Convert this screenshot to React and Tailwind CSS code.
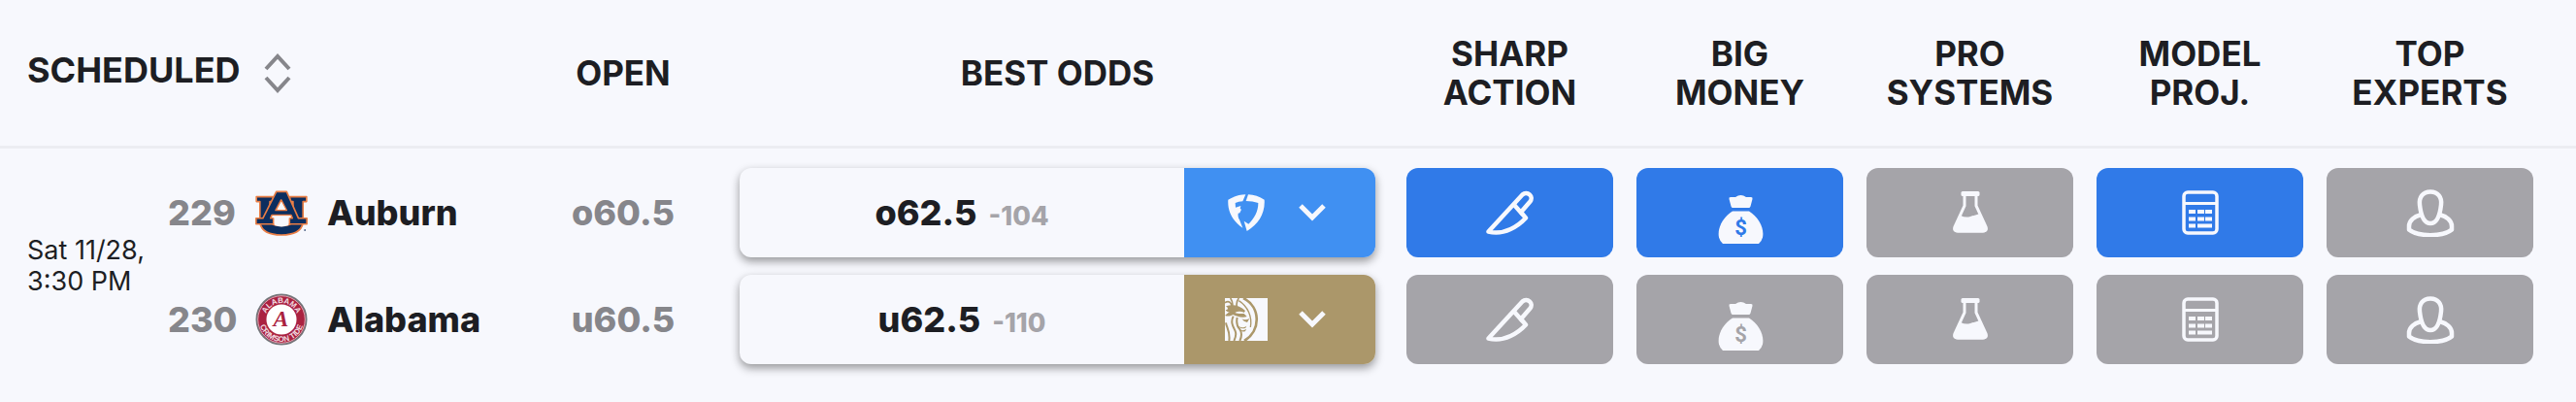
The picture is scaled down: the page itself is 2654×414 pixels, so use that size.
import React, { useState } from "react";

const signals = [
  { id: "sharp", label: ["SHARP", "ACTION"], Icon: KnifeIcon, over: true, under: false },
  { id: "money", label: ["BIG", "MONEY"], Icon: MoneyBagIcon, over: true, under: false },
  { id: "systems", label: ["PRO", "SYSTEMS"], Icon: FlaskIcon, over: false, under: false },
  { id: "model", label: ["MODEL", "PROJ."], Icon: CalculatorIcon, over: true, under: false },
  { id: "experts", label: ["TOP", "EXPERTS"], Icon: ExpertIcon, over: false, under: false },
];

const sides = [
  {
    key: "over",
    rotation: 229,
    team: "Auburn",
    Logo: AuburnLogo,
    open: "o60.5",
    best: "o62.5",
    price: "-104",
    book: "FanDuel",
    BookLogo: FanDuelLogo,
    bookColor: "bg-[#4090f2]",
  },
  {
    key: "under",
    rotation: 230,
    team: "Alabama",
    Logo: AlabamaLogo,
    open: "u60.5",
    best: "u62.5",
    price: "-110",
    book: "BetMGM",
    BookLogo: BetMgmLogo,
    bookColor: "bg-[#ab976a]",
  },
];

function SortIcon() {
  return (
    <svg viewBox="0 0 28 46" className="w-7 h-[46px]" fill="none" stroke="#86868b" strokeWidth="4">
      <path d="M2 19 14 6l12 13M2 28l12 13 12-13" />
    </svg>
  );
}

function ChevronIcon() {
  return (
    <svg viewBox="0 0 28 18" className="w-7 h-[18px]" fill="none" stroke="#f7f8fd" strokeWidth="5">
      <path d="m2 2 12 12L26 2" />
    </svg>
  );
}

function KnifeIcon() {
  return (
    <svg viewBox="0 0 50 50" className="size-[50px]" fill="none" stroke="currentColor" strokeWidth="4.500" strokeLinejoin="round" strokeLinecap="round">
      <path d="M2.500 44.500 37.500 6.500c5-4.500 12 2 8 7L36 24.500l5 6C34 38 19 49 2.500 44.500Z" />
      <path d="m29 17 8 9" />
    </svg>
  );
}

function MoneyBagIcon() {
  return (
    <svg viewBox="0 0 50 80" className="w-[50px] h-20" fill="currentColor">
      <path d="M13.500 26q-.6-2 1.500-2h5q5.500-4 11 0h5q2 0 1.500 2l-2 7.500q-.4 1.500-2 1.500h-16q-1.600 0-2-1.500Z" />
      <path d="M17 38.500h17c10 6 16 18 14 27q-1 4-4 6.500H7q-3-2.500-4-6.500c-2-9 4-21 14-27Z" />
      <text x="25.500" y="63" textAnchor="middle" fontFamily="Roboto" fontWeight="700" fontSize="22" className="fill-[var(--tile)]">
        $
      </text>
    </svg>
  );
}

function FlaskIcon() {
  return (
    <svg viewBox="0 0 38 44" className="w-[38px] h-11">
      <path
        d="M13 3h12v12l10 21.500q1.500 4.500-3 4.500H6q-4.500 0-3-4.500L13 15Z"
        fill="none"
        stroke="currentColor"
        strokeWidth="3"
      />
      <path d="M11 0h16q1.500 0 1.500 1.500v2Q28.500 5 27 5H11q-1.500 0-1.500-1.500v-2Q9.500 0 11 0Z" fill="currentColor" />
      <path d="M9 25q5 2.500 10 1t10-3l7 14q1.500 5.500-4 5.500H6q-5.500 0-4-5.500Z" fill="currentColor" />
    </svg>
  );
}

function CalculatorIcon() {
  return (
    <svg viewBox="0 0 38 46" className="w-[38px] h-[46px]">
      <rect x="2" y="2" width="34" height="42" rx="4" fill="none" stroke="currentColor" strokeWidth="3.500" />
      <path d="M2 13.500h34" stroke="currentColor" strokeWidth="3" />
      <path
        d="M7 20h7v4H7zM16 20h7v4h-7zM24 20h7v4h-7zM7 27.500h7v4H7zM16 27.500h7v4h-7zM24 27.500h7v4h-7zM7 34.500h7v4H7zM16 34.500h15v4H16z"
        fill="currentColor"
      />
    </svg>
  );
}

function ExpertIcon() {
  return (
    <svg viewBox="0 0 50 50" className="size-[50px]" fill="none" stroke="currentColor" strokeWidth="4.500">
      <path d="M25 3.500c8 0 12 6 11 13.500C35 26 32 36 25 36S15 26 14 17C13 9.500 17 3.500 25 3.500Z" />
      <path d="M15.500 27C8 29 3 33.500 3 39v3.500c9 7.500 35 7.500 44 0V39c0-5.500-5-10-12.500-12" strokeLinejoin="round" />
    </svg>
  );
}

function FanDuelLogo() {
  return (
    <svg viewBox="0 0 114 114" className="size-[38px]" fill="currentColor">
      <path d="M55 1 46 22q-13 1-23 5l1 14 16-5-2 9 4 2-5 11-5 1c-1 8 0 14 4 20l10 25C22 89-2 60 1 17 18 6 36 2 55 1Z" />
      <path d="M63 1c18 1 35 6 50 16 3 42-18 76-54 97L50 83l14 9c18-17 30-39 30-65q-17-6-38-6Z" />
    </svg>
  );
}

function BetMgmLogo() {
  return (
    <svg viewBox="0 0 132 132" className="size-11" fill="none" stroke="#ab976a">
      <path d="M0 0h132v132H0z" fill="#f7f8fd" stroke="none" />
      <path d="M57 0C112 28 111 102 60 132" strokeWidth="8" />
      <path d="M43 8c28 18 42 50 36 82" strokeWidth="4" />
      <path d="M17 0c6 9 8 17 6 25M43 0c-6 8-8 17-6 25M0 14c12-7 21 0 20 11" strokeWidth="5" />
      <path d="M3 25c20-6 42-4 60 14l-4 6c-12-5-20-4-28 0 8 4 18 3 28 3l9 9c-14 5-32 0-43-6-9 5-16 6-25 3 6-5 10-9 15-11-7 0-11-3-13-7 8 0 10-5 1-11Z" fill="#ab976a" stroke="none" />
      <path d="M26 56c-10 20 0 32 6 46 4 10 0 22-4 30M38 60c-4 18 0 27 7 35 7 9 7 24 1 37M3 76c2 15 14 26 10 56" strokeWidth="6" />
      <path d="M52 64c8 5 16 3 24-1l-7 12-10-4ZM42 88c8 3 16 4 25-2l-3 6c-8 4-16 2-22-4ZM48 98c8 3 13 1 18-3-2 10-10 12-18 3Z" fill="#ab976a" stroke="none" />
    </svg>
  );
}

function AuburnLogo() {
  return (
    <svg viewBox="0 0 162 142" className="w-[54px] h-[47px]" fill="#0c2e5f" stroke="#e87d45" strokeWidth="5" strokeLinejoin="round">
      <path
        d="M3 20h52v15H45v60q5 15 36 15t36-15V35h-10V20h52v15h-11v67q-8 37-67 37t-67-37V35H3Z"
      />
      <path
        d="M65 4h32l37 83h26v18h-54V87h9l-4-10H51l-4 10h9v18H2V87h21Z M80 30 63 62h34Z"
        fillRule="evenodd"
      />
      <path d="M81 36 68 60h26Z" fill="#f7f8fd" stroke="none" />
      <path d="M54 80h54v5h-5v24q-22 8-44 0V85h-5Z" fill="#f7f8fd" stroke="none" />
      <circle cx="154" cy="124" r="3" fill="#53688a" stroke="none" />
    </svg>
  );
}

function AlabamaLogo() {
  return (
    <svg viewBox="0 0 160 160" className="size-[54px]">
      <defs>
        <path id="crest-top" d="M30 80a50 50 0 0 1 100 0" />
        <path id="crest-bottom" d="M12 80a68 68 0 0 0 136 0" />
      </defs>
      <circle cx="80" cy="80" r="76" fill="#aa2240" stroke="#74777b" strokeWidth="5" />
      <circle cx="80" cy="80" r="72" fill="none" stroke="#f7e9ed" strokeWidth="2" />
      <circle cx="80" cy="80" r="46" fill="#fff" />
      <g fill="#f1dce1" fontFamily="Liberation Sans" fontWeight="700" fontSize="24" textAnchor="middle">
        <text>
          <textPath href="#crest-top" startOffset="50%">ALABAMA</textPath>
        </text>
        <text>
          <textPath href="#crest-bottom" startOffset="50%">CRIMSON TIDE</textPath>
        </text>
      </g>
      <text x="78" y="102" textAnchor="middle" fontFamily="Liberation Serif" fontStyle="italic" fontWeight="700" fontSize="70" fill="#aa2240">
        A
      </text>
    </svg>
  );
}

function HeaderCell({ className = "", children }) {
  return (
    <th className={`h-[153px] border-b-3 border-[#ecedf2] font-bold ${className}`}>{children}</th>
  );
}

function SignalTile({ label, active, Icon }) {
  return (
    <button
      type="button"
      aria-label={label}
      aria-pressed={active}
      className={`flex h-[92px] w-full items-center justify-center overflow-hidden rounded-xl text-[#f7f8fd] ${
        active
          ? "bg-[#307ae8] [--tile:#307ae8]"
          : "bg-[#a5a4a9] [--tile:#a5a4a9]"
      }`}
    >
      <Icon />
    </button>
  );
}

export default function App() {
  const [descending, setDescending] = useState(false);

  return (
    <main className="min-h-screen bg-[#f7f8fd] font-[Inter,sans-serif] text-[#1d1e23]">
      <table className="w-full table-fixed border-separate border-spacing-0 text-[35px] leading-10">
        <colgroup>
          <col className="w-[546px]" />
          <col className="w-[196px]" />
          <col />
          {signals.map((s) => (
            <col key={s.id} className="w-[237px]" />
          ))}
          <col className="w-8" />
        </colgroup>
        <thead>
          <tr>
            <HeaderCell>
              <button
                type="button"
                className="flex items-start gap-6 pl-7 text-4xl leading-10"
                onClick={() => setDescending(!descending)}
              >
                SCHEDULED
                <SortIcon />
              </button>
            </HeaderCell>
            <HeaderCell className="pr-1">OPEN</HeaderCell>
            <HeaderCell>BEST ODDS</HeaderCell>
            {signals.map((s) => (
              <HeaderCell key={s.id}>
                {s.label[0]}
                <br />
                {s.label[1]}
              </HeaderCell>
            ))}
            <HeaderCell />
          </tr>
        </thead>
        <tbody>
          <tr className="align-top text-4xl leading-10">
            <td className="py-5 pl-7">
              <div className="flex items-center">
                <time className="w-[145px] shrink-0 text-[27px] leading-8">
                  Sat 11/28,
                  <br />
                  3:30 PM
                </time>
                <div className="flex flex-col gap-[18px]">
                  {sides.map(({ key, rotation, team, Logo }) => (
                    <div key={key} className="flex h-[92px] items-center">
                      <span className="w-[90px] font-extrabold text-[#86868b]">{rotation}</span>
                      <Logo />
                      <span className="pl-5 font-extrabold">{team}</span>
                    </div>
                  ))}
                </div>
              </div>
            </td>
            <td className="py-5 pr-1">
              <div className="flex flex-col gap-[18px] text-center font-extrabold text-[#86868b]">
                {sides.map((side) => (
                  <span key={side.key} className="flex h-[92px] items-center justify-center">
                    {side.open}
                  </span>
                ))}
              </div>
            </td>
            <td className="px-5 py-5">
              <div className="flex flex-col gap-[18px]">
                {sides.map(({ key, best, price, book, BookLogo, bookColor }) => (
                  <div
                    key={key}
                    className="flex h-[92px] overflow-hidden rounded-xl bg-[#f7f8fd] shadow-[0_4px_10px_rgba(0,0,0,0.4)]"
                  >
                    <div className="flex flex-1 items-baseline justify-center gap-3 pt-[26px] font-extrabold">
                      {best}
                      <span className="text-[27px] text-[#a5a4a9]">{price}</span>
                    </div>
                    <button
                      type="button"
                      aria-label={`${book} odds`}
                      className={`flex w-[197px] items-center pl-[42px] text-[#f7f8fd] ${bookColor}`}
                    >
                      <span className="flex w-11 justify-center">
                        <BookLogo />
                      </span>
                      <span className="pl-8">
                        <ChevronIcon />
                      </span>
                    </button>
                  </div>
                ))}
              </div>
            </td>
            {signals.map((s) => (
              <td key={s.id} className="px-3 py-5">
                <div className="flex flex-col gap-[18px]">
                  {sides.map((side) => (
                    <SignalTile
                      key={side.key}
                      label={`${s.label.join(" ")} ${side.team}`}
                      active={s[side.key]}
                      Icon={s.Icon}
                    />
                  ))}
                </div>
              </td>
            ))}
            <td />
          </tr>
        </tbody>
      </table>
    </main>
  );
}
